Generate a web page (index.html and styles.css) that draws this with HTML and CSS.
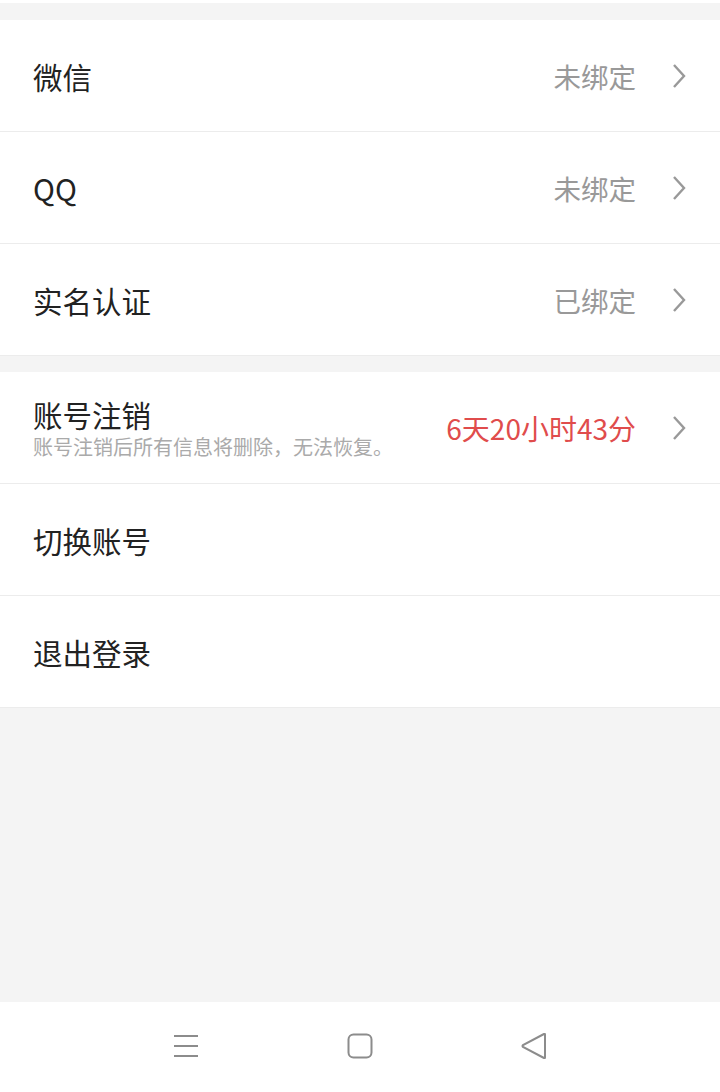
FILE: index.html
```html
<!DOCTYPE html>
<html>
<head>
    <title>账号设置</title>
    <link rel="stylesheet" href="styles.css">
</head>
<body>
    <div class="page">
        <div class="top-edge"></div>
        <div class="gap gap-top"></div>

        <div class="group">
            <div class="row">
                <span class="title">微信</span>
                <span class="value">未绑定</span>
                <svg class="arrow" viewBox="0 0 14 26"><path d="M2 2 L12 13 L2 24"/></svg>
            </div>
            <div class="row">
                <span class="title">QQ</span>
                <span class="value">未绑定</span>
                <svg class="arrow" viewBox="0 0 14 26"><path d="M2 2 L12 13 L2 24"/></svg>
            </div>
            <div class="row">
                <span class="title">实名认证</span>
                <span class="value">已绑定</span>
                <svg class="arrow" viewBox="0 0 14 26"><path d="M2 2 L12 13 L2 24"/></svg>
            </div>
        </div>

        <div class="gap"></div>

        <div class="group">
            <div class="row">
                <div class="title-block">
                    <span class="title">账号注销</span>
                    <span class="sub">账号注销后所有信息将删除，无法恢复。</span>
                </div>
                <span class="value value-red">6天20小时43分</span>
                <svg class="arrow" viewBox="0 0 14 26"><path d="M2 2 L12 13 L2 24"/></svg>
            </div>
            <div class="row">
                <span class="title">切换账号</span>
            </div>
            <div class="row">
                <span class="title">退出登录</span>
            </div>
        </div>

        <div class="filler"></div>

        <div class="navbar">
            <svg class="nav-icon" viewBox="0 0 26 26"><path d="M1 3 H25 M1 13 H25 M1 23 H25"/></svg>
            <svg class="nav-icon" viewBox="0 0 26 26"><rect x="1.5" y="1.5" width="23" height="23" rx="5"/></svg>
            <svg class="nav-icon" viewBox="0 0 26 26"><path d="M24 1.5 V24.5 Q24 25.5 23 25 L2 14 Q1 13 2 12 L23 1 Q24 0.5 24 1.5 Z"/></svg>
        </div>
    </div>
</body>
</html>
```

FILE: styles.css
```css
body {
    margin: 0;
    font-family: "Noto Sans CJK SC", "Noto Sans", sans-serif;
    background: #f4f4f4;
}

.page {
    width: 720px;
    height: 1092px;
    display: flex;
    flex-direction: column;
}

.top-edge {
    height: 3px;
    background: #fff;
}

.gap {
    height: 16px;
    background: #f4f4f4;
}

.gap-top {
    height: 17px;
}

.group {
    background: #fff;
}

.row {
    height: 111px;
    border-bottom: 1px solid #ececec;
    display: flex;
    align-items: center;
    padding: 0 34px 0 33px;
}

.title {
    font-size: 29.5px;
    color: #222;
    flex: 1;
}

.title-block {
    flex: 1;
    display: flex;
    flex-direction: column;
    margin-top: 0;
}

.title-block .title {
    line-height: 38px;
}

.sub {
    font-size: 20px;
    color: #aaa;
    line-height: 28px;
}

.value {
    font-size: 27.5px;
    color: #999;
}

.value-red {
    font-size: 28px;
    color: #e04c4c;
}

.arrow {
    width: 14px;
    height: 26px;
    margin-left: 36px;
    fill: none;
    stroke: #999;
    stroke-width: 2.4;
}

.filler {
    flex: 1;
}

.navbar {
    height: 88px;
    background: #fff;
    display: flex;
    justify-content: center;
    align-items: center;
    gap: 148px;
    padding-bottom: 2px;
}

.nav-icon {
    width: 26px;
    height: 26px;
    fill: none;
    stroke: #8c8c8c;
    stroke-width: 2;
}
```
